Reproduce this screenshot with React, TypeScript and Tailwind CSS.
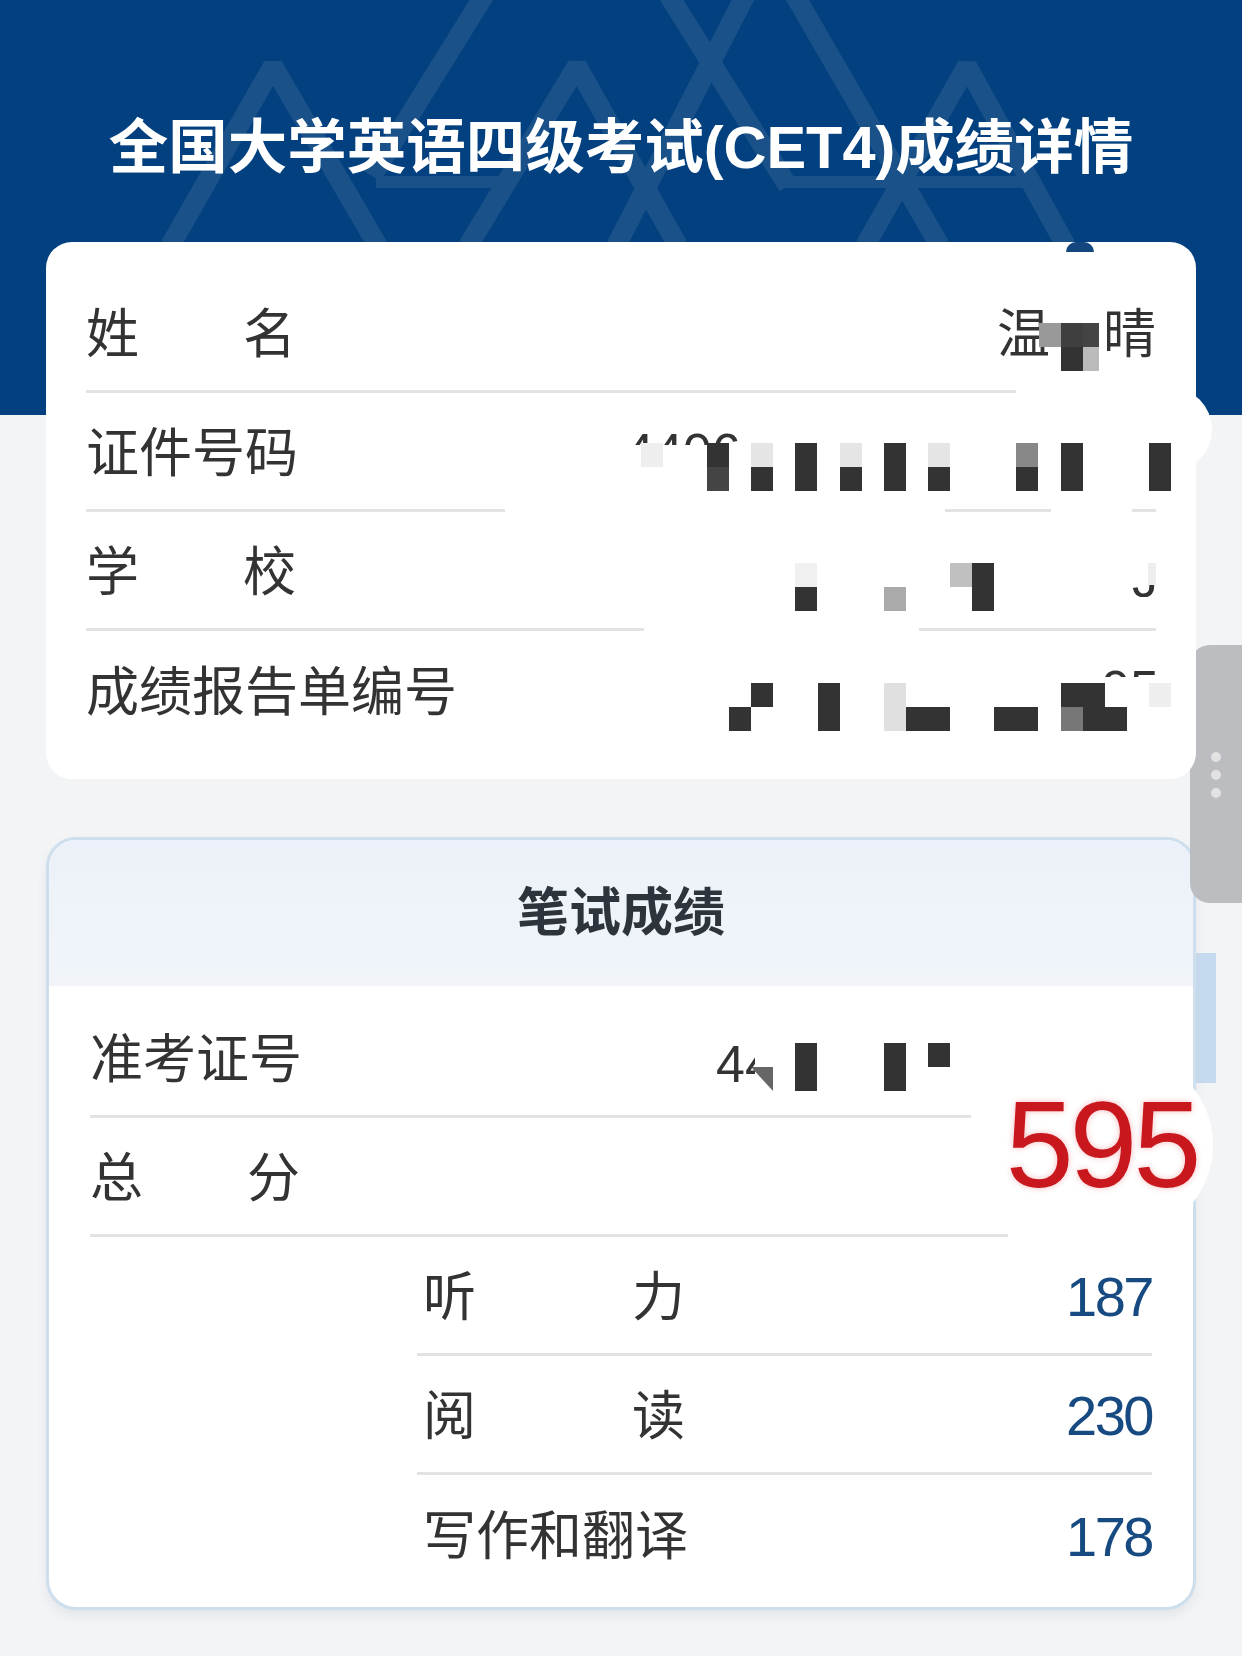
const FONT = 'font-["Liberation_Sans","Noto_Sans_CJK_SC",sans-serif]'

const DARK = '#333333'

// mosaic tiles: [column, top, colour] on a 22px by 24px grid that starts at x=707
const tiles: [number, number, string][] = [
  // name
  [15, 323, '#999999'], [16, 323, '#3f3f3f'], [16, 347, DARK], [17, 323, '#444444'], [17, 347, '#bbbbbb'],
  // id number
  [-3, 443, '#eeeeee'],
  [0, 443, DARK], [0, 467, '#444444'],
  [2, 443, '#e5e5e5'], [2, 467, DARK],
  [4, 443, DARK], [4, 467, DARK],
  [6, 443, '#e5e5e5'], [6, 467, DARK],
  [8, 443, DARK], [8, 467, DARK],
  [10, 443, '#e5e5e5'], [10, 467, DARK],
  [14, 443, '#888888'], [14, 467, DARK],
  [16, 443, DARK], [16, 467, DARK],
  [20, 443, DARK], [20, 467, DARK],
  // school
  [4, 563, '#f0f0f0'], [4, 587, DARK],
  [8, 587, '#aaaaaa'],
  [11, 563, '#c0c0c0'],
  [12, 563, DARK], [12, 587, DARK],
  // report number
  [2, 683, DARK], [1, 707, DARK],
  [5, 683, DARK], [5, 707, DARK],
  [8, 683, '#e0e0e0'], [8, 707, '#e0e0e0'],
  [9, 707, DARK], [10, 707, DARK],
  [13, 707, DARK], [14, 707, DARK],
  [16, 683, DARK], [17, 683, DARK],
  [16, 707, '#777777'], [17, 707, DARK], [18, 707, DARK],
  [20, 683, '#eeeeee'],
  // ticket number
  [4, 1043, DARK], [4, 1067, DARK],
  [8, 1043, DARK], [8, 1067, DARK],
  [10, 1043, DARK],
]

// white patches that interrupt the row rules: [left, top, width, height]
const patches: [number, number, number, number][] = [
  [1016, 387, 150, 12],
  [505, 506, 440, 12],
  [1051, 506, 81, 12],
  [644, 625, 275, 12],
  [971, 1111, 40, 10],
  [1008, 1230, 182, 10],
]

function Label({ text, width }: { text: string; width: string }) {
  return (
    <span className={`flex justify-between ${width}`}>
      {text.split('').map((c, i) => (
        <span key={i}>{c}</span>
      ))}
    </span>
  )
}

function Row({ children, rule = true, className = '' }: { children: React.ReactNode; rule?: boolean; className?: string }) {
  return (
    <div className={`flex h-[119px] items-center justify-between pt-[4px] ${rule ? 'border-b-[3px] border-[#e3e3e3]' : ''} ${className}`}>
      {children}
    </div>
  )
}

function ScoreRow({ label, value, rule = true, full = false }: { label: string; value: string; rule?: boolean; full?: boolean }) {
  return (
    <Row rule={rule} className="pl-[6px]">
      {full ? <span>{label}</span> : <Label text={label} width="w-[262px]" />}
      <span className="text-[56px] tracking-[-2.5px] text-[#174a80]">{value}</span>
    </Row>
  )
}

export default function App() {
  return (
    <div className={`relative h-[1656px] w-[1242px] overflow-hidden bg-[#f3f4f6] text-[53px] leading-none text-[#333] ${FONT}`}>
      <header className="relative h-[415px] bg-[#03407f]">
        <svg className="absolute left-0 top-0" width="1242" height="242" viewBox="0 0 1242 242" fill="none">
          <g stroke="#1a5189" strokeWidth="20" strokeLinejoin="bevel">
            <path d="M170 246 273 66 378 246" />
            <path d="M468 246 577 66 678 246" />
            <path d="M865 246 967 66 1066 246" />
            <path d="M485 -6 372 176" />
            <path d="M668 -6 788 186" />
            <path d="M746 -6 616 246" />
            <path d="M794 -6 940 246" />
          </g>
          <g stroke="#1a5189" strokeWidth="12">
            <path d="M376 182H503" />
            <path d="M782 182H1030" />
          </g>
        </svg>
        <h1 className="relative flex h-[296px] items-center justify-center text-[59.5px] font-bold text-white">
          全国大学英语四级考试(CET4)成绩详情
        </h1>
      </header>

      {/* side handle and scroll marker */}
      <div className="absolute left-[1195px] top-[953px] h-[130px] w-[21px] bg-[#c6daef]" />
      <div className="absolute right-0 top-[645px] z-[5] flex h-[258px] w-[52px] flex-col items-center gap-[8px] rounded-l-[20px] bg-[#bcbdc0] pt-[107px]">
        <span className="size-[10px] rounded-full bg-[#e2e2e2]" />
        <span className="size-[10px] rounded-full bg-[#e2e2e2]" />
        <span className="size-[10px] rounded-full bg-[#e2e2e2]" />
      </div>

      <main className="relative -mt-[173px] flex flex-col gap-[58px] pl-[46px] pr-[46px]">
        <section className="relative z-10 rounded-[26px] bg-white px-[40px] pb-[29px] pt-[32px]">
          <span className="absolute left-[1020px] top-0 h-[10px] w-[28px] rounded-t-full bg-[#14467f]" />
          <Row>
            <Label text="姓名" width="w-[210px]" />
            <span className="flex">
              <span>温</span>
              <span className="w-[53px]" />
              <span>晴</span>
            </span>
          </Row>
          <Row>证件号码</Row>
          <Row>
            <Label text="学校" width="w-[210px]" />
          </Row>
          <Row rule={false}>成绩报告单编号</Row>
        </section>

        <section className="relative overflow-hidden rounded-[30px] border-[3px] border-[#cddeec] bg-white shadow-[0_6px_10px_rgba(200,205,215,0.35)]">
          <h2 className="flex h-[146px] items-center justify-center bg-gradient-to-b from-[#ecf1f9] to-[#f1f5fa] text-[52px] font-bold text-[#2e343b]">
            笔试成绩
          </h2>
          <div className="pb-[13px] pl-[41px] pr-[41px] pt-[13px]">
            <Row>准考证号</Row>
            <Row>
              <Label text="总分" width="w-[210px]" />
            </Row>
            <div className="ml-[327px]">
              <ScoreRow label="听力" value="187" />
              <ScoreRow label="阅读" value="230" />
              <ScoreRow label="写作和翻译" value="178" rule={false} full />
            </div>
          </div>
        </section>
      </main>

      {/* redaction layer over the personal details */}
      <div className="absolute left-[1000px] top-[387px] z-20 h-[85px] w-[212px] rounded-[44px] bg-white" />
      {patches.map(([l, t, w, h], i) => (
        <div key={i} className="absolute z-20 bg-white" style={{ left: l, top: t, width: w, height: h }} />
      ))}
      <div className="absolute left-[625px] top-[432px] z-20 h-[13px] overflow-hidden text-[52px]">
        <span className="block leading-[40px]">4406</span>
      </div>
      <div className="absolute left-[1101px] top-[669px] z-20 h-[8px] overflow-hidden text-[52px]">
        <span className="block leading-[40px]">05</span>
      </div>
      <div className="absolute left-[1148px] top-[563px] z-20 h-[22px] w-[8px] bg-[#eeeeee]" />
      <div className="absolute left-[1132px] top-[585px] z-20 h-[12px] w-[24px] overflow-hidden text-right text-[52px]">
        <span className="-mt-[24px] block leading-[36px]">J</span>
      </div>
      <div className="absolute left-[716px] top-[1034px] z-20 h-[60px] w-[39px] overflow-hidden text-[52px] leading-[60px]">44</div>
      <div className="absolute left-[751px] top-[1067px] z-20 h-[24px] w-[22px] bg-[#666] [clip-path:polygon(0_0,100%_0,100%_100%)]" />
      {tiles.map(([col, top, color], i) => (
        <div
          key={i}
          className="absolute z-20 h-[24px] w-[22px]"
          style={{ left: 707 + col * 22.1, top, backgroundColor: color }}
        />
      ))}
      <div className="absolute left-[1099px] top-[323px] z-20 h-[48px] w-[7px] bg-white" />

      {/* total score */}
      <div className="absolute left-[990px] top-[1052px] z-20 flex h-[186px] w-[223px] items-center justify-center rounded-full bg-white text-[122px] tracking-[-4px] text-[#c8181e] [text-shadow:0_0_6px_rgba(230,60,70,0.35)]">
        595
      </div>
    </div>
  )
}
